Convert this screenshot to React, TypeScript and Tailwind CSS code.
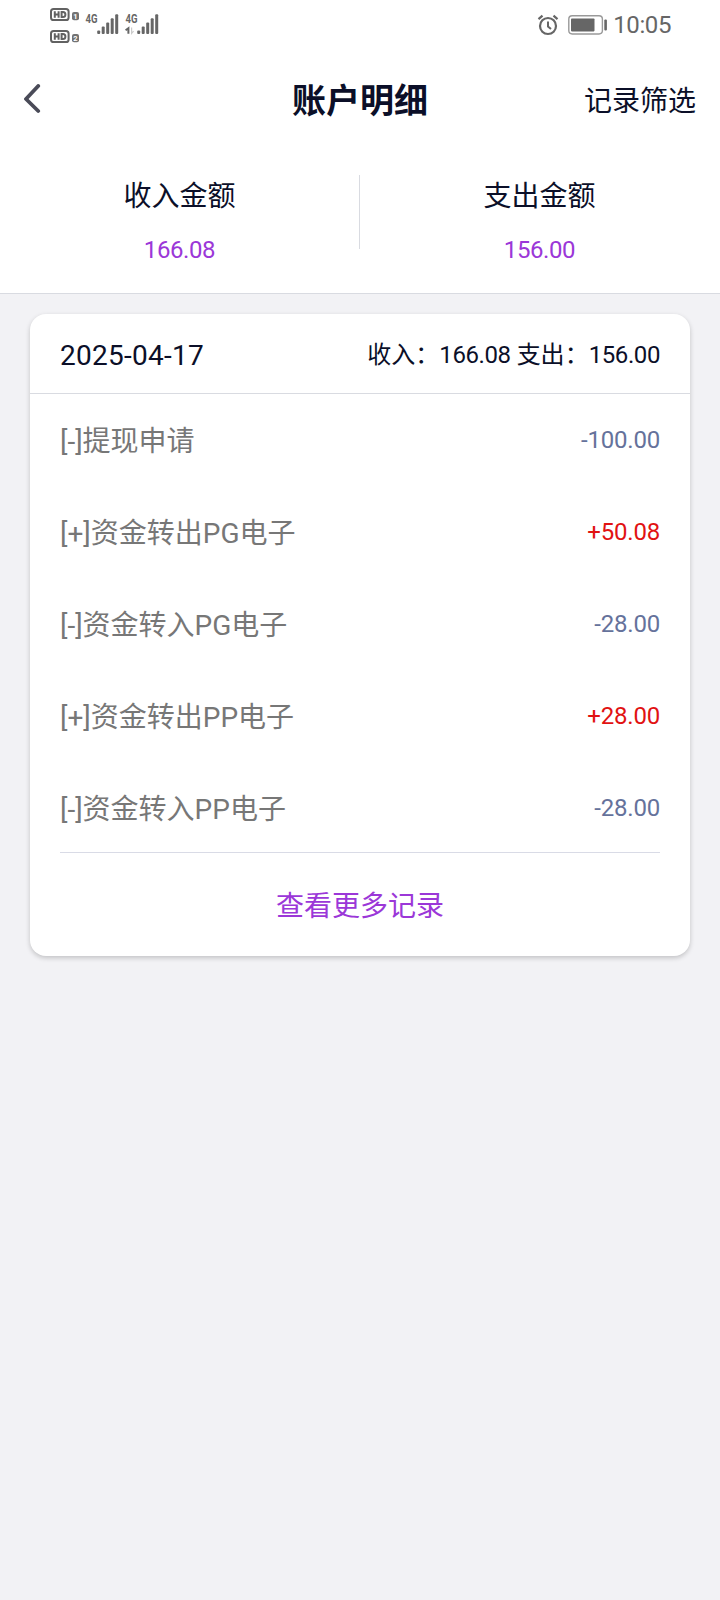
type RecordItem = {
  id: number;
  title: string;
  amount: string;
};

const records: RecordItem[] = [
  { id: 1, title: '[-]提现申请', amount: '-100.00' },
  { id: 2, title: '[+]资金转出PG电子', amount: '+50.08' },
  { id: 3, title: '[-]资金转入PG电子', amount: '-28.00' },
  { id: 4, title: '[+]资金转出PP电子', amount: '+28.00' },
  { id: 5, title: '[-]资金转入PP电子', amount: '-28.00' },
];

const signalBars = [0, 1, 2, 3, 4];

function HdBadge({ slot }: { slot: string }) {
  return (
    <svg width="30" height="13" viewBox="0 0 30 13" aria-hidden="true">
      <rect x="1" y="1" width="17.6" height="11" rx="2.6" fill="none" stroke="#626262" strokeWidth="2" />
      <path d="M4.8 3.2v6.6M8.6 3.2v6.6M4.8 6.5h4M11.6 4v5h1.4q2.4 0 2.4-2.5t-2.4-2.5z" fill="none" stroke="#626262" strokeWidth="2" />
      <rect x="22" y="4" width="7" height="8.2" rx="2" fill="#727272" />
      <text x="25.5" y="10.8" textAnchor="middle" fontSize="7.5" fontWeight="700" fill="#fff">
        {slot}
      </text>
    </svg>
  );
}

function Signal({ withData = false }: { withData?: boolean }) {
  return (
    <svg width="34" height="24" viewBox="0 0 34 24" aria-hidden="true">
      <text x="0.5" y="9.6" fontSize="12" fontWeight="700" fill="#666" textLength="12" lengthAdjust="spacingAndGlyphs">
        4G
      </text>
      {withData && (
        <>
          <path d="M0.6 17.2l2.8-2v5.6" fill="none" stroke="#666" strokeWidth="2" />
          <path d="M6.6 14.4v6l2-2.2" fill="none" stroke="#ccc" strokeWidth="1.2" />
        </>
      )}
      {signalBars.map((bar) => (
        <rect
          key={bar}
          x={12.2 + bar * 4.5}
          y={17.6 - bar * 4.1}
          width="3"
          height={3.4 + bar * 4.1}
          rx="1"
          fill="#666"
        />
      ))}
    </svg>
  );
}

function StatusBar() {
  return (
    <div className="flex h-[50px] items-start justify-between pr-[49px] pl-[50px] text-[#666]">
      <div className="flex">
        <div className="flex flex-col gap-[9px] pt-2">
          <HdBadge slot="1" />
          <HdBadge slot="2" />
        </div>
        <div className="flex gap-[6px] pt-[13px] pl-[5px]">
          <Signal />
          <Signal withData />
        </div>
      </div>
      <div className="flex items-center pt-[9px]">
        <svg width="22" height="22" viewBox="0 0 22 22" fill="none" stroke="#666" aria-hidden="true">
          <circle cx="11" cy="12" r="8" strokeWidth="2.2" />
          <path d="M11 7.5v5l3 2.6" strokeWidth="2" />
          <path d="M1.5 5.2l4-3.5M20.5 5.2l-4-3.5" strokeWidth="2.2" />
        </svg>
        <svg className="ml-[9px]" width="40" height="20" viewBox="0 0 40 20" aria-hidden="true">
          <rect x="0.8" y="0.8" width="33.6" height="18.2" rx="3.4" fill="#fff" stroke="#999" strokeWidth="1.4" />
          <rect x="3" y="3.4" width="23.5" height="13" rx="0.8" fill="#666" />
          <rect x="36.3" y="4.5" width="2.6" height="11" rx="1" fill="#666" />
        </svg>
        <span className="ml-[5px] text-2xl tracking-[-0.4px]">10:05</span>
      </div>
    </div>
  );
}

function SummaryCell({ label, value }: { label: string; value: string }) {
  return (
    <div className="flex flex-1 flex-col items-center">
      <span className="pt-px text-[28px] leading-[42px]">{label}</span>
      <span className="mt-3.5 text-2xl leading-9 tracking-[-0.4px] text-[#9b37d8]">{value}</span>
    </div>
  );
}

function DayTotal({ label, value }: { label: string; value: string }) {
  return (
    <span>
      {label}：<span className="tracking-[-0.4px]">{value}</span>
    </span>
  );
}

export default function App() {
  return (
    <main className="min-h-[1600px] w-[720px] bg-[#f2f2f5] font-[Roboto,'Noto_Sans_CJK_SC',sans-serif] text-[#0b0f28]">
      <div className="h-[294px] border-b border-[#d9dbe1] bg-white">
        <StatusBar />
        <header className="grid h-[100px] grid-cols-[1fr_auto_1fr] items-center px-6">
          <button type="button" aria-label="返回" className="pb-0.5">
            <svg width="17" height="30" viewBox="0 0 17 30" fill="none" aria-hidden="true">
              <path d="M14.2 2L2 15l12.2 12" stroke="#4a4b58" strokeWidth="3.8" strokeLinecap="round" strokeLinejoin="round" />
            </svg>
          </button>
          <h1 className="pt-0.5 text-[34px] font-bold">账户明细</h1>
          <button type="button" className="pt-1 text-right text-[28px]">
            记录筛选
          </button>
        </header>
        <section className="flex pt-[25px] pr-px">
          <SummaryCell label="收入金额" value="166.08" />
          <div className="h-[74px] w-px bg-[#d9dbe1]" />
          <SummaryCell label="支出金额" value="156.00" />
        </section>
      </div>

      <section className="mx-[30px] mt-5 h-[642px] rounded-2xl bg-white shadow-[0_2px_5px_rgba(0,0,0,0.2)]">
        <div className="flex h-20 items-center justify-between border-b border-[#d9dbe1] px-[30px]">
          <span className="pt-1 text-[28px] tracking-[0.25px]">2025-04-17</span>
          <span className="pt-0.5 text-2xl">
            <DayTotal label="收入" value="166.08" /> <DayTotal label="支出" value="156.00" />
          </span>
        </div>
        <ul className="mx-[30px] h-[459px] border-b border-[#d9dbe6]">
          {records.map((record) => (
            <li key={record.id} className="flex h-[92px] items-center justify-between">
              <span className="pt-1 text-[28px] text-[#777]">{record.title}</span>
              <span
                className={
                  record.amount.startsWith('+')
                    ? 'text-2xl tracking-[-0.2px] text-[#e11212]'
                    : 'text-2xl tracking-[-0.2px] text-[#65729b]'
                }
              >
                {record.amount}
              </span>
            </li>
          ))}
        </ul>
        <button type="button" className="h-[103px] w-full pt-1 text-[28px] text-[#9b37d8]">
          查看更多记录
        </button>
      </section>
    </main>
  );
}
